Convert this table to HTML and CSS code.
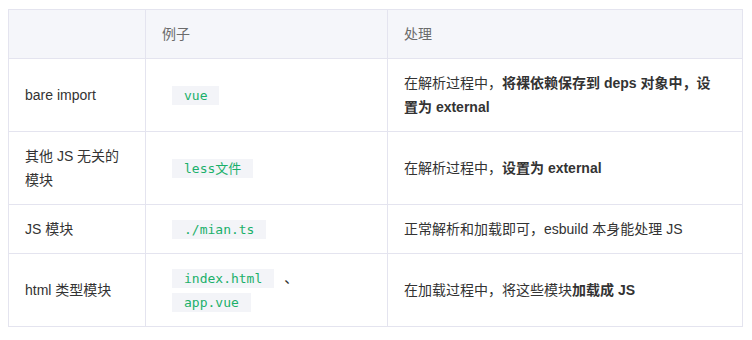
FILE: index.html
```html
<!DOCTYPE html>
<html lang="zh-CN">
<head>
<meta charset="utf-8">
<link rel="stylesheet" href="styles.css">
</head>
<body>
<div class="wrap">
<table class="tbl">
  <colgroup>
    <col class="c1">
    <col class="c2">
    <col class="c3">
  </colgroup>
  <thead>
    <tr><th></th><th>例子</th><th>处理</th></tr>
  </thead>
  <tbody>
    <tr>
      <td>bare import</td>
      <td><code>vue</code></td>
      <td class="desc">在解析过程中，<strong>将裸依赖保存到 deps 对象中，设置为 external</strong></td>
    </tr>
    <tr>
      <td>其他 JS 无关的模块</td>
      <td><code>less文件</code></td>
      <td class="desc">在解析过程中，<strong>设置为 external</strong></td>
    </tr>
    <tr>
      <td>JS 模块</td>
      <td><code>./mian.ts</code></td>
      <td class="desc">正常解析和加载即可，esbuild 本身能处理 JS</td>
    </tr>
    <tr>
      <td>html 类型模块</td>
      <td><code>index.html</code>、<code>app.vue</code></td>
      <td class="desc">在加载过程中，将这些模块<strong>加载成 JS</strong></td>
    </tr>
  </tbody>
</table>
</div>
</body>
</html>
```
FILE: styles.css
```css
html, body {
  margin: 0;
  padding: 0;
  background: #ffffff;
}
body {
  font-family: "Liberation Sans", Arial, "Noto Sans CJK SC", sans-serif;
  font-size: 14px;
  color: #333333;
}
.wrap {
  padding: 9px 10px 0 8px;
}
.tbl {
  border-collapse: collapse;
  table-layout: fixed;
  width: 734px;
}
.c1 { width: 137px; }
.c2 { width: 242px; }
.c3 { width: 355px; }
.tbl th,
.tbl td {
  border: 1px solid #e4e4ef;
  padding: 12px 16px;
  line-height: 24px;
  text-align: left;
  vertical-align: middle;
}
.tbl td.desc {
  padding-right: 22px;
}
.tbl th {
  background: #f5f6fa;
  font-weight: normal;
  color: #6b6b6b;
}
.tbl strong {
  font-weight: bold;
  color: #333333;
}
.tbl code {
  font-family: "DejaVu Sans Mono", "Liberation Mono", "Noto Sans CJK SC", monospace;
  font-size: 13px;
  line-height: 16px;
  color: #1bb06a;
  background: #f3f4f8;
  padding: 2px 12px;
  margin: 0 10px;
}
```
